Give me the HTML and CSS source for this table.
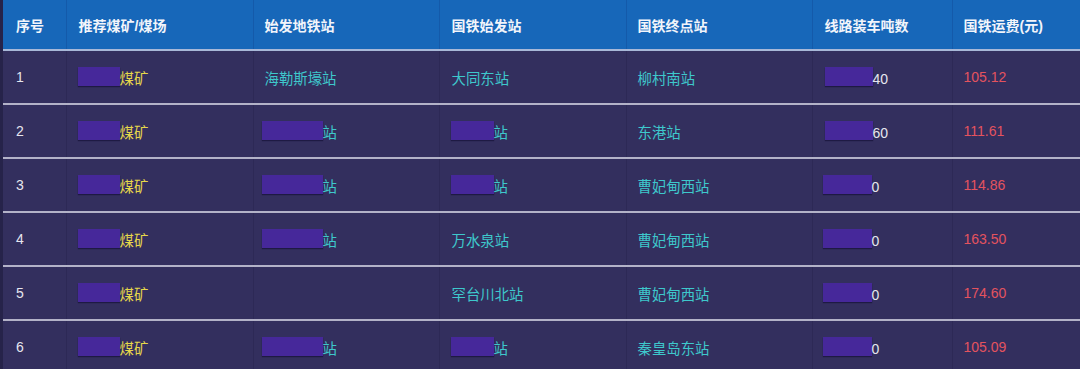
FILE: index.html
```html
<!DOCTYPE html>
<html lang="zh-CN">
<head>
<meta charset="utf-8">
<title>推荐煤矿</title>
<link rel="stylesheet" href="styles.css">
</head>
<body>
<div class="page">
  <table class="grid">
    <colgroup>
      <col class="c1"><col class="c2"><col class="c3"><col class="c4"><col class="c5"><col class="c6"><col class="c7">
    </colgroup>
    <thead>
      <tr>
        <th>序号</th><th>推荐煤矿/煤场</th><th>始发地铁站</th><th>国铁始发站</th><th>国铁终点站</th><th>线路装车吨数</th><th>国铁运费(元)</th>
      </tr>
    </thead>
    <tbody>
      <tr>
        <td class="num">1</td>
        <td class="mine"><span class="mask m-mine"></span>煤矿</td>
        <td class="st">海勒斯壕站</td>
        <td class="st">大同东站</td>
        <td class="st">柳村南站</td>
        <td class="num"><span class="mask m-ton"></span>40</td>
        <td class="fee">105.12</td>
      </tr>
      <tr>
        <td class="num">2</td>
        <td class="mine"><span class="mask m-mine"></span>煤矿</td>
        <td class="st"><span class="mask m-st"></span>站</td>
        <td class="st"><span class="mask m-st2"></span>站</td>
        <td class="st">东港站</td>
        <td class="num"><span class="mask m-ton"></span>60</td>
        <td class="fee">111.61</td>
      </tr>
      <tr>
        <td class="num">3</td>
        <td class="mine"><span class="mask m-mine"></span>煤矿</td>
        <td class="st"><span class="mask m-st"></span>站</td>
        <td class="st"><span class="mask m-st2"></span>站</td>
        <td class="st">曹妃甸西站</td>
        <td class="num"><span class="mask m-ton m-ton-z"></span>0</td>
        <td class="fee">114.86</td>
      </tr>
      <tr>
        <td class="num">4</td>
        <td class="mine"><span class="mask m-mine"></span>煤矿</td>
        <td class="st"><span class="mask m-st"></span>站</td>
        <td class="st">万水泉站</td>
        <td class="st">曹妃甸西站</td>
        <td class="num"><span class="mask m-ton m-ton-z"></span>0</td>
        <td class="fee">163.50</td>
      </tr>
      <tr>
        <td class="num">5</td>
        <td class="mine"><span class="mask m-mine"></span>煤矿</td>
        <td class="st"></td>
        <td class="st">罕台川北站</td>
        <td class="st">曹妃甸西站</td>
        <td class="num"><span class="mask m-ton m-ton-z"></span>0</td>
        <td class="fee">174.60</td>
      </tr>
      <tr>
        <td class="num">6</td>
        <td class="mine"><span class="mask m-mine"></span>煤矿</td>
        <td class="st"><span class="mask m-st"></span>站</td>
        <td class="st"><span class="mask m-st2"></span>站</td>
        <td class="st">秦皇岛东站</td>
        <td class="num"><span class="mask m-ton m-ton-z"></span>0</td>
        <td class="fee">105.09</td>
      </tr>
    </tbody>
  </table>
</div>
</body>
</html>
```
FILE: styles.css
```css
html, body {
  margin: 0;
  padding: 0;
  background: #332f5e;
  overflow: hidden;
}
body {
  font-family: "Liberation Sans", "Noto Sans CJK SC", sans-serif;
  font-size: 14px;
  color: #e6e6ef;
}
.page {
  width: 1080px;
  height: 369px;
  border-left: 3px solid #26234a;
  box-sizing: border-box;
  overflow: hidden;
}
.grid {
  width: 1077px;
  border-collapse: collapse;
  table-layout: fixed;
}
.c1 { width: 63px; }
.c2 { width: 187px; }
.c3 { width: 186px; }
.c4 { width: 187px; }
.c5 { width: 186px; }
.c6 { width: 140px; }
.c7 { width: 128px; }

th, td {
  text-align: left;
  padding: 0 0 0 12px;
  white-space: nowrap;
  border-left: 1px solid rgba(20, 16, 50, 0.18);
}
th:first-child, td:first-child { border-left: none; padding-left: 13px; }

thead th {
  height: 50px;
  background: #1767b9;
  color: #f2f5fb;
  font-weight: bold;
  font-size: 14px;
  border-left-color: rgba(10, 40, 110, 0.2);
  border-bottom: 2px solid #a8b8d8;
  box-sizing: border-box;
}
tbody td {
  height: 52px;
  border-bottom: 2px solid #b3b2c8;
  font-size: 14.4px;
}
th:nth-child(3), td:nth-child(3) { padding-left: 11px; }
th:nth-child(5), td:nth-child(5) { padding-left: 11px; }
th:nth-child(7), td:nth-child(7) { padding-left: 11px; }

.num { color: #e6e6ef; font-size: 14px; }
.mine { color: #e6d84a; }
.st { color: #3ec8cc; }
.fee { color: #e4535e; font-size: 14px; }

.mask {
  display: inline-block;
  height: 19px;
  background: #46289a;
  vertical-align: -2px;
  box-shadow: 0 1px 1px rgba(10, 5, 40, 0.5);
}
.m-mine { width: 42px; margin-left: -1px; }
.m-st { width: 61px; margin-left: -3px; }
.m-st2 { width: 43px; margin-left: -1px; }
.m-ton { width: 48px; }
.m-ton-z { margin-left: -2px; width: 49px; }
```
